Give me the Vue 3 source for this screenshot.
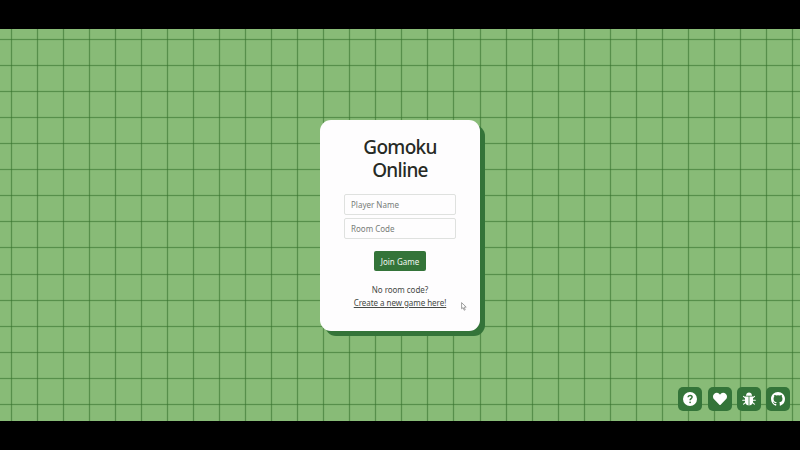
<script setup>
import { ref } from 'vue'

const playerName = ref('')
const roomCode = ref('')

const pitch = 26.045
const columns = Array.from({ length: 31 }, (_, i) => Math.floor(11.2 + i * pitch) + 0.5)
const rows = Array.from({ length: 15 }, (_, i) => Math.floor(10.6 + i * pitch) + 0.5)
</script>

<template>
  <div class="screen">
    <main class="board">
      <svg class="grid" viewBox="0 0 800 392" aria-hidden="true">
        <g class="soft">
          <line v-for="x in columns" :key="'sx' + x" :x1="x" :x2="x" y1="0" y2="392" />
          <line v-for="y in rows" :key="'sy' + y" x1="0" x2="800" :y1="y" :y2="y" />
        </g>
        <g class="fine">
          <line v-for="x in columns" :key="'x' + x" :x1="x" :x2="x" y1="0" y2="392" />
          <line v-for="y in rows" :key="'y' + y" x1="0" x2="800" :y1="y" :y2="y" />
        </g>
      </svg>

      <form class="card" @submit.prevent>
        <h1>Gomoku<br />Online</h1>
        <input v-model="playerName" type="text" placeholder="Player Name" />
        <input v-model="roomCode" type="text" placeholder="Room Code" />
        <button class="join" type="submit">Join Game</button>
        <p>No room code?<br /><a href="#">Create a new game here!</a></p>
      </form>

      <nav class="tools">
        <button type="button" aria-label="Help">
          <svg viewBox="0 0 14 14">
            <circle cx="7" cy="7" r="7" />
            <path class="mark" d="M5 5.3C5.2 2.8 9.1 2.8 9.1 5.1 9.1 6.6 7.1 6.6 7.1 8.2" />
            <circle class="dot" cx="7.1" cy="10.3" r=".85" />
          </svg>
        </button>
        <button type="button" aria-label="Favourite">
          <svg viewBox="0 0 512 512"><path d="M462 62c-55-46-136-38-187 14l-19 20-20-20C186 24 104 16 50 62c-63 53-66 149-10 207l193 200c13 13 33 13 46 0l193-200c56-58 53-154-10-207z" /></svg>
        </button>
        <button type="button" aria-label="Report a bug">
          <svg viewBox="0 0 14 14">
            <path d="M4 3.8C4 1.7 5.3.5 7 .5s3 1.2 3 3.3z" />
            <path d="M3 4.6h3.6v9C4.4 13.4 3 11.7 3 9.6zM11 4.6H7.4v9c2.2-.2 3.6-1.9 3.6-4z" />
            <path class="legs" d="M3.5 6 1.5 4.3M10.5 6l2-1.7M3.4 8.3H.7M10.6 8.3h2.7M3.6 10.4l-2 1.8M10.4 10.4l2 1.8" />
          </svg>
        </button>
        <button type="button" aria-label="GitHub">
          <svg viewBox="0 0 16 16"><path d="M8 0C3.58 0 0 3.58 0 8c0 3.54 2.29 6.53 5.47 7.59.4.07.55-.17.55-.38 0-.19-.01-.82-.01-1.49-2.01.37-2.53-.49-2.69-.94-.09-.23-.48-.94-.82-1.13-.28-.15-.68-.52-.01-.53.63-.01 1.08.58 1.23.82.72 1.21 1.87.87 2.33.66.07-.52.28-.87.51-1.07-1.78-.2-3.64-.89-3.64-3.95 0-.87.31-1.59.82-2.15-.08-.2-.36-1.02.08-2.12 0 0 .67-.21 2.2.82a7.4 7.4 0 0 1 4 0c1.53-1.04 2.2-.82 2.2-.82.44 1.1.16 1.92.08 2.12.51.56.82 1.27.82 2.15 0 3.07-1.87 3.75-3.65 3.95.29.25.54.73.54 1.48 0 1.07-.01 1.93-.01 2.2 0 .21.15.46.55.38A8 8 0 0 0 16 8c0-4.42-3.58-8-8-8z" /></svg>
        </button>
      </nav>

      <svg class="pointer" viewBox="0 0 6 9" aria-hidden="true"><path d="M.6.6v6.2l1.5-1.2 1.1 2.6 1-.4-1-2.6 2-.1z" /></svg>
    </main>
  </div>
</template>

<style>
body {
  margin: 0;
  background: #000;
}
</style>

<style scoped>
.screen {
  box-sizing: border-box;
  height: 450px;
  padding: 29px 0;
  background: #000;
  font-family: "Noto Sans", "Open Sans", sans-serif;
}
.board {
  position: relative;
  display: flex;
  justify-content: center;
  align-items: flex-start;
  box-sizing: border-box;
  height: 392px;
  padding-top: 91px;
  background: #88bb77;
  overflow: hidden;
}
.grid {
  position: absolute;
  inset: 0;
  width: 800px;
  height: 392px;
}
.soft {
  stroke: #4d8b43;
  stroke-opacity: 0.17;
  stroke-width: 2.2;
}
.fine {
  stroke: #336f2d;
  stroke-opacity: 0.52;
  stroke-width: 1;
}
.card {
  position: relative;
  display: flex;
  flex-direction: column;
  align-items: center;
  box-sizing: border-box;
  width: 160px;
  height: 211px;
  padding: 16px 24px 0;
  border-radius: 11px;
  background: #fefdfe;
  box-shadow: 5px 5px 0 #347439;
  color: #272a25;
}
h1 {
  margin: 0 0 12px;
  font-size: 19px;
  line-height: 23px;
  font-weight: 500;
  letter-spacing: -0.7px;
  text-align: center;
}
input {
  box-sizing: border-box;
  width: 112px;
  height: 21px;
  margin: 0 0 3px;
  padding: 0 6px;
  border: 1px solid #dfe1df;
  border-radius: 2px;
  background: #fefdfe;
  font: 8px "Noto Sans", sans-serif;
  color: #333;
  outline: none;
}
input::placeholder {
  color: #777c78;
  opacity: 1;
}
.join {
  width: 52px;
  height: 20px;
  margin-top: 9px;
  padding: 0;
  border: 0;
  border-radius: 2px;
  background: #347439;
  color: #f2f7f1;
  font: 8px "Noto Sans", sans-serif;
}
p {
  margin: 13px 0 0;
  font-size: 8px;
  letter-spacing: -0.05px;
  line-height: 12.5px;
  text-align: center;
  white-space: nowrap;
  color: #454945;
}
a {
  color: inherit;
}
.tools {
  position: absolute;
  right: 10px;
  bottom: 10px;
  display: flex;
  gap: 5.2px;
}
.tools button {
  display: flex;
  align-items: center;
  justify-content: center;
  width: 24px;
  height: 24px;
  padding: 0;
  border: 0;
  border-radius: 5px;
  background: #347439;
}
.tools svg {
  width: 14px;
  height: 14px;
  fill: #fff;
}
.tools .mark {
  fill: none;
  stroke: #347439;
  stroke-width: 1.5;
}
.tools .dot {
  fill: #347439;
}
.tools .legs {
  fill: none;
  stroke: #fff;
  stroke-width: 1.1;
  stroke-linecap: round;
}
.pointer {
  position: absolute;
  left: 461px;
  top: 273px;
  width: 6px;
  height: 9px;
  fill: #fff;
  stroke: #888;
  stroke-width: 0.8;
}
</style>
